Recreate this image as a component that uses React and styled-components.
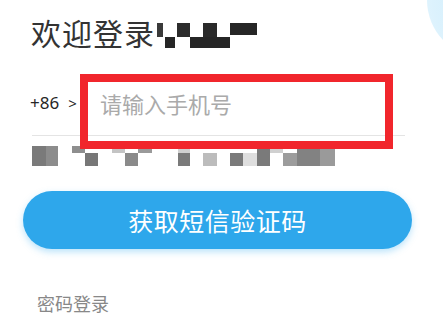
import React from "react";
import styled, { createGlobalStyle } from "styled-components";

const Global = createGlobalStyle`
  html, body { margin: 0; padding: 0; background: #fff; }
  body { font-family: "Noto Sans CJK SC", "Noto Sans", sans-serif; }
`;

const Page = styled.div`
  position: relative;
  width: 443px;
  height: 324px;
  overflow: hidden;
  background: #fff;
  display: flex;
  flex-direction: column;
`;

const Bubble = styled.div`
  position: absolute;
  left: 427px;
  top: -58px;
  width: 116px;
  height: 116px;
  border-radius: 50%;
  background: radial-gradient(circle at 60% 50%, #c9ebfb 0%, #dcf2fd 70%, #e8f7fe 100%);
`;

const TitleRow = styled.div`
  display: flex;
  align-items: center;
  margin: 13px 0 0 31px;
  height: 38px;
`;

const Title = styled.h1`
  margin: 0;
  font-size: 30px;
  font-weight: 400;
  line-height: 38px;
  color: #333;
  letter-spacing: 1px;
`;

const PhoneRow = styled.div`
  display: flex;
  align-items: center;
  margin: 32px 38px 0 32px;
  height: 40px;
  padding-bottom: 12px;
  border-bottom: 1px solid #e4e4e4;
`;

const Prefix = styled.span`
  display: flex;
  align-items: center;
  width: 68px;
  flex: none;
  margin-left: -2px;
  font-family: "Noto Sans", sans-serif;
  font-size: 17px;
  color: #262626;
  line-height: 20px;
`;

const Arrow = styled.span`
  margin-left: 9px;
  font-size: 15px;
`;

const Placeholder = styled.span`
  margin-left: 2px;
  font-size: 22px;
  color: #aaa;
  line-height: 30px;
`;

const MosaicRow = styled.div`
  margin: 10px 0 0 32px;
  height: 21px;
  display: flex;
`;

const Button = styled.button`
  margin: 24px 0 0 23px;
  width: 389px;
  height: 58px;
  border: none;
  border-radius: 29px;
  background: #2ea7eb;
  color: #fff;
  font-family: inherit;
  font-size: 25px;
  letter-spacing: 0.5px;
  box-shadow: 0 3px 7px rgba(60, 175, 240, 0.35);
  display: flex;
  align-items: center;
  justify-content: center;
  padding: 0;
`;

const Link = styled.span`
  margin: 43px 0 0 37px;
  font-size: 18px;
  line-height: 22px;
  color: #888;
`;

const Highlight = styled.div`
  position: absolute;
  left: 80px;
  top: 74px;
  width: 313px;
  height: 75px;
  box-sizing: border-box;
  border: 8px solid #f1262c;
`;

const titleBlocks = [
  [2, 8, 6, 14, "#3a3a3a"],
  [10, 22, 10, 11, "#262626"],
  [22, 8, 13, 14, "#2c2c2c"],
  [35, 22, 40, 11, "#262626"],
  [48, 8, 14, 14, "#2a2a2a"],
  [75, 8, 27, 12, "#262626"],
];

const subBlocks = [
  [0, 0, 14, 20, "#7a7a7a"],
  [14, 0, 12, 20, "#8c8c8c"],
  [40, 0, 13, 7, "#8e8e8e"],
  [53, 7, 13, 13, "#777"],
  [80, 2, 13, 5, "#c4c4c4"],
  [93, 7, 13, 13, "#8a8a8a"],
  [106, 2, 14, 5, "#9a9a9a"],
  [146, 2, 12, 5, "#d0d0d0"],
  [146, 7, 12, 13, "#7a7a7a"],
  [171, 7, 14, 13, "#bcbcbc"],
  [198, 7, 13, 13, "#7a7a7a"],
  [211, 7, 14, 13, "#dedede"],
  [225, 0, 13, 20, "#7a7a7a"],
  [238, 2, 13, 5, "#d0d0d0"],
  [251, 7, 14, 13, "#9c9c9c"],
  [265, 2, 23, 18, "#828282"],
  [288, 2, 15, 18, "#9a9a9a"],
];

function Mosaic({ blocks, width, height }) {
  return (
    <svg width={width} height={height} viewBox={`0 0 ${width} ${height}`}>
      {blocks.map(([x, y, w, h, c], i) => (
        <rect key={i} x={x} y={y} width={w} height={h} fill={c} />
      ))}
    </svg>
  );
}

export default function App() {
  return (
    <>
      <Global />
      <Page>
        <Bubble />
        <TitleRow>
          <Title>欢迎登录</Title>
          <Mosaic blocks={titleBlocks} width={104} height={34} />
        </TitleRow>
        <PhoneRow>
          <Prefix>
            +86<Arrow>&gt;</Arrow>
          </Prefix>
          <Placeholder>请输入手机号</Placeholder>
        </PhoneRow>
        <MosaicRow>
          <Mosaic blocks={subBlocks} width={304} height={20} />
        </MosaicRow>
        <Button>获取短信验证码</Button>
        <Link>密码登录</Link>
        <Highlight />
      </Page>
    </>
  );
}
